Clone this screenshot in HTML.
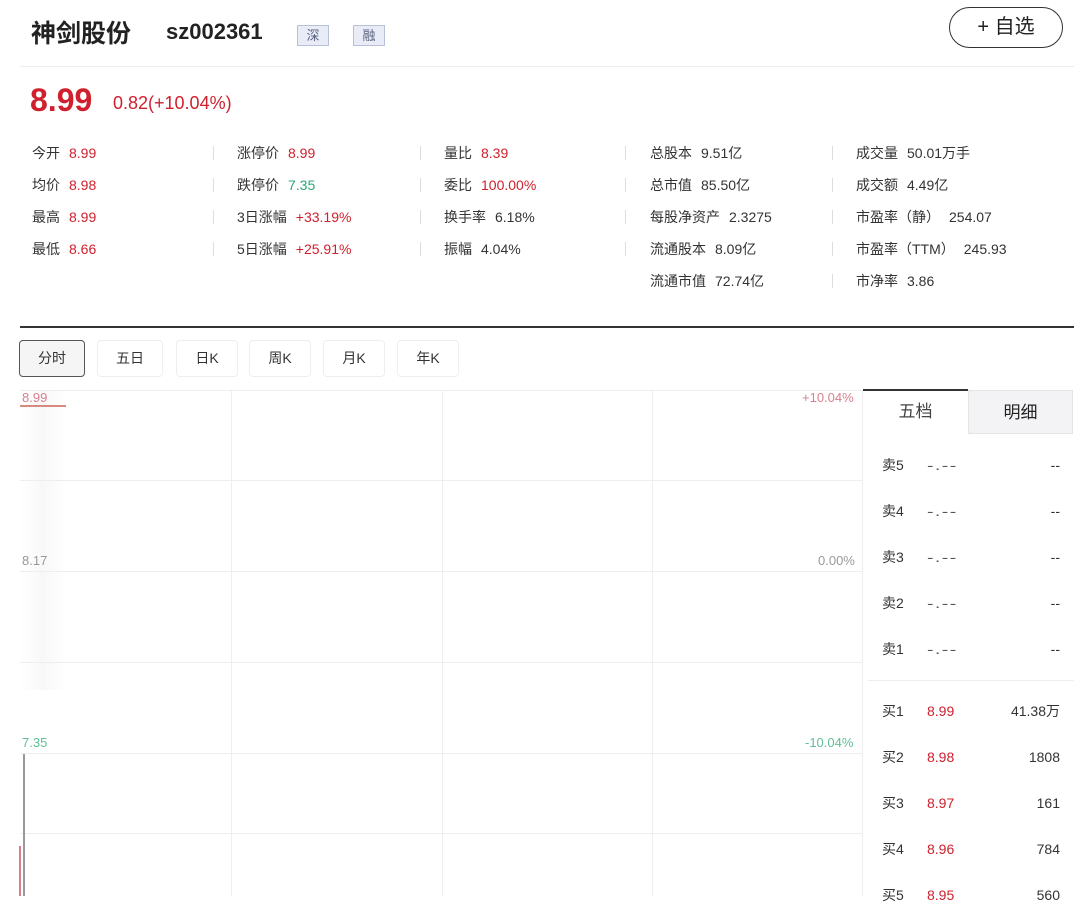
<!DOCTYPE html>
<html><head><meta charset="utf-8"><style>
*{margin:0;padding:0;box-sizing:border-box}
body{width:1090px;height:896px;overflow:hidden;background:#fff;font-family:"Liberation Sans","Noto Sans CJK SC",sans-serif;color:#333;position:relative}
.a{position:absolute;white-space:nowrap}
.r{color:#d0202e}.g{color:#2aa876}
.s{font-size:14px;line-height:16px}
.s b{font-weight:normal;margin-left:9px}
.dv{position:absolute;width:1px;height:14px;background:#ddd}
.tab{position:absolute;top:340px;height:37px;border:1px solid #eee;border-radius:4px;font-size:14px;text-align:center;line-height:35px;color:#333}
.hl{position:absolute;left:20px;width:842px;height:1px;background:#eee}
.vl{position:absolute;top:390px;height:506px;width:1px;background:#eee}
.ob{position:absolute;left:882px;width:178px;font-size:14px;height:18px;line-height:18px}
.ob span{position:absolute;top:0}
.dd{letter-spacing:1px;color:#555;transform:scaleX(1.4);transform-origin:left}
</style></head><body>
<div class="a" style="left:20px;top:390px;width:46px;height:300px;background:linear-gradient(90deg,#fff,#f8f8f8,#fff)"></div>
<div class="a" style="left:31px;top:14px;font-size:25px;font-weight:bold;color:#222">神剑股份</div>
<div class="a" style="left:166px;top:19px;font-size:22px;font-weight:bold;color:#222">sz002361</div>
<div class="a" style="left:297px;top:25px;width:32px;height:21px;background:#e9ecf6;border:1px solid #b8c0d8;font-size:13px;color:#5a6480;text-align:center;line-height:19px">深</div>
<div class="a" style="left:353px;top:25px;width:32px;height:21px;background:#e9ecf6;border:1px solid #b8c0d8;font-size:13px;color:#5a6480;text-align:center;line-height:19px">融</div>
<div class="a" style="left:949px;top:7px;width:114px;height:41px;border:1.5px solid #333;border-radius:21px;font-size:20px;text-align:center;line-height:38px;color:#222">+ 自选</div>
<div class="a" style="left:20px;top:66px;width:1054px;height:1px;background:#eee"></div>
<div class="a r" style="left:30px;top:82px;font-size:32px;font-weight:bold">8.99</div>
<div class="a r" style="left:113px;top:93px;font-size:18px">0.82(+10.04%)</div>

<div class="a s" style="left:32px;top:145px">今开<b class="r">8.99</b></div>
<div class="a s" style="left:32px;top:177px">均价<b class="r">8.98</b></div>
<div class="a s" style="left:32px;top:209px">最高<b class="r">8.99</b></div>
<div class="a s" style="left:32px;top:241px">最低<b class="r">8.66</b></div>
<div class="a s" style="left:237px;top:145px">涨停价<b class="r">8.99</b></div>
<div class="a s" style="left:237px;top:177px">跌停价<b class="g">7.35</b></div>
<div class="a s" style="left:237px;top:209px">3日涨幅<b class="r">+33.19%</b></div>
<div class="a s" style="left:237px;top:241px">5日涨幅<b class="r">+25.91%</b></div>
<div class="a s" style="left:444px;top:145px">量比<b class="r">8.39</b></div>
<div class="a s" style="left:444px;top:177px">委比<b class="r">100.00%</b></div>
<div class="a s" style="left:444px;top:209px">换手率<b>6.18%</b></div>
<div class="a s" style="left:444px;top:241px">振幅<b>4.04%</b></div>
<div class="a s" style="left:650px;top:145px">总股本<b>9.51亿</b></div>
<div class="a s" style="left:650px;top:177px">总市值<b>85.50亿</b></div>
<div class="a s" style="left:650px;top:209px">每股净资产<b>2.3275</b></div>
<div class="a s" style="left:650px;top:241px">流通股本<b>8.09亿</b></div>
<div class="a s" style="left:650px;top:273px">流通市值<b>72.74亿</b></div>
<div class="a s" style="left:856px;top:145px">成交量<b>50.01万手</b></div>
<div class="a s" style="left:856px;top:177px">成交额<b>4.49亿</b></div>
<div class="a s" style="left:856px;top:209px">市盈率（静）<b>254.07</b></div>
<div class="a s" style="left:856px;top:241px">市盈率（TTM）<b>245.93</b></div>
<div class="a s" style="left:856px;top:273px">市净率<b>3.86</b></div>
<div class="dv" style="left:213px;top:146px"></div><div class="dv" style="left:213px;top:178px"></div><div class="dv" style="left:213px;top:210px"></div><div class="dv" style="left:213px;top:242px"></div>
<div class="dv" style="left:420px;top:146px"></div><div class="dv" style="left:420px;top:178px"></div><div class="dv" style="left:420px;top:210px"></div><div class="dv" style="left:420px;top:242px"></div>
<div class="dv" style="left:625px;top:146px"></div><div class="dv" style="left:625px;top:178px"></div><div class="dv" style="left:625px;top:210px"></div><div class="dv" style="left:625px;top:242px"></div>
<div class="dv" style="left:832px;top:146px"></div><div class="dv" style="left:832px;top:178px"></div><div class="dv" style="left:832px;top:210px"></div><div class="dv" style="left:832px;top:242px"></div><div class="dv" style="left:832px;top:274px"></div>

<div class="a" style="left:20px;top:326px;width:1054px;height:2px;background:#333"></div>
<div class="tab" style="left:19px;width:66px;border:1px solid #555;background:#f5f5f5">分时</div>
<div class="tab" style="left:97px;width:66px">五日</div>
<div class="tab" style="left:176px;width:62px">日K</div>
<div class="tab" style="left:249px;width:62px">周K</div>
<div class="tab" style="left:323px;width:62px">月K</div>
<div class="tab" style="left:397px;width:62px">年K</div>

<div class="hl" style="top:390px"></div><div class="hl" style="top:480px"></div><div class="hl" style="top:571px"></div><div class="hl" style="top:662px"></div><div class="hl" style="top:753px"></div><div class="hl" style="top:833px"></div>
<div class="vl" style="left:231px"></div><div class="vl" style="left:442px"></div><div class="vl" style="left:652px"></div><div class="vl" style="left:862px"></div>
<div class="a" style="left:22px;top:390px;font-size:13px;color:#d88090">8.99</div>
<div class="a" style="left:20px;top:405px;width:46px;height:2px;background:#d88a80"></div>
<div class="a" style="left:22px;top:553px;font-size:13px;color:#999">8.17</div>
<div class="a" style="left:22px;top:735px;font-size:13px;color:#5fbf95">7.35</div>
<div class="a" style="left:802px;top:390px;font-size:13px;color:#d88090">+10.04%</div>
<div class="a" style="left:818px;top:553px;font-size:13px;color:#999">0.00%</div>
<div class="a" style="left:805px;top:735px;font-size:13px;color:#5fbf95">-10.04%</div>
<div class="a" style="left:23px;top:754px;width:2px;height:142px;background:#999"></div>
<div class="a" style="left:19px;top:846px;width:2px;height:50px;background:#e07a88"></div>

<div class="a" style="left:863px;top:389px;width:105px;height:2px;background:#333"></div>
<div class="a" style="left:863px;top:391px;width:105px;height:42px;font-size:17px;text-align:center;line-height:42px;color:#444">五档</div>
<div class="a" style="left:968px;top:390px;width:105px;height:44px;background:#f3f3f5;border:1px solid #e4e4e4;font-size:17px;text-align:center;line-height:44px;color:#222">明细</div>
<div class="ob" style="top:456px"><span style="left:0">卖5</span><span class="dd" style="left:45px">-.--</span><span style="right:0">--</span></div>
<div class="ob" style="top:502px"><span style="left:0">卖4</span><span class="dd" style="left:45px">-.--</span><span style="right:0">--</span></div>
<div class="ob" style="top:548px"><span style="left:0">卖3</span><span class="dd" style="left:45px">-.--</span><span style="right:0">--</span></div>
<div class="ob" style="top:594px"><span style="left:0">卖2</span><span class="dd" style="left:45px">-.--</span><span style="right:0">--</span></div>
<div class="ob" style="top:640px"><span style="left:0">卖1</span><span class="dd" style="left:45px">-.--</span><span style="right:0">--</span></div>
<div class="a" style="left:868px;top:680px;width:206px;height:1px;background:#eee"></div>
<div class="ob" style="top:702px"><span style="left:0">买1</span><span class="r" style="left:45px">8.99</span><span style="right:0">41.38万</span></div>
<div class="ob" style="top:748px"><span style="left:0">买2</span><span class="r" style="left:45px">8.98</span><span style="right:0">1808</span></div>
<div class="ob" style="top:794px"><span style="left:0">买3</span><span class="r" style="left:45px">8.97</span><span style="right:0">161</span></div>
<div class="ob" style="top:840px"><span style="left:0">买4</span><span class="r" style="left:45px">8.96</span><span style="right:0">784</span></div>
<div class="ob" style="top:886px"><span style="left:0">买5</span><span class="r" style="left:45px">8.95</span><span style="right:0">560</span></div>
</body></html>
